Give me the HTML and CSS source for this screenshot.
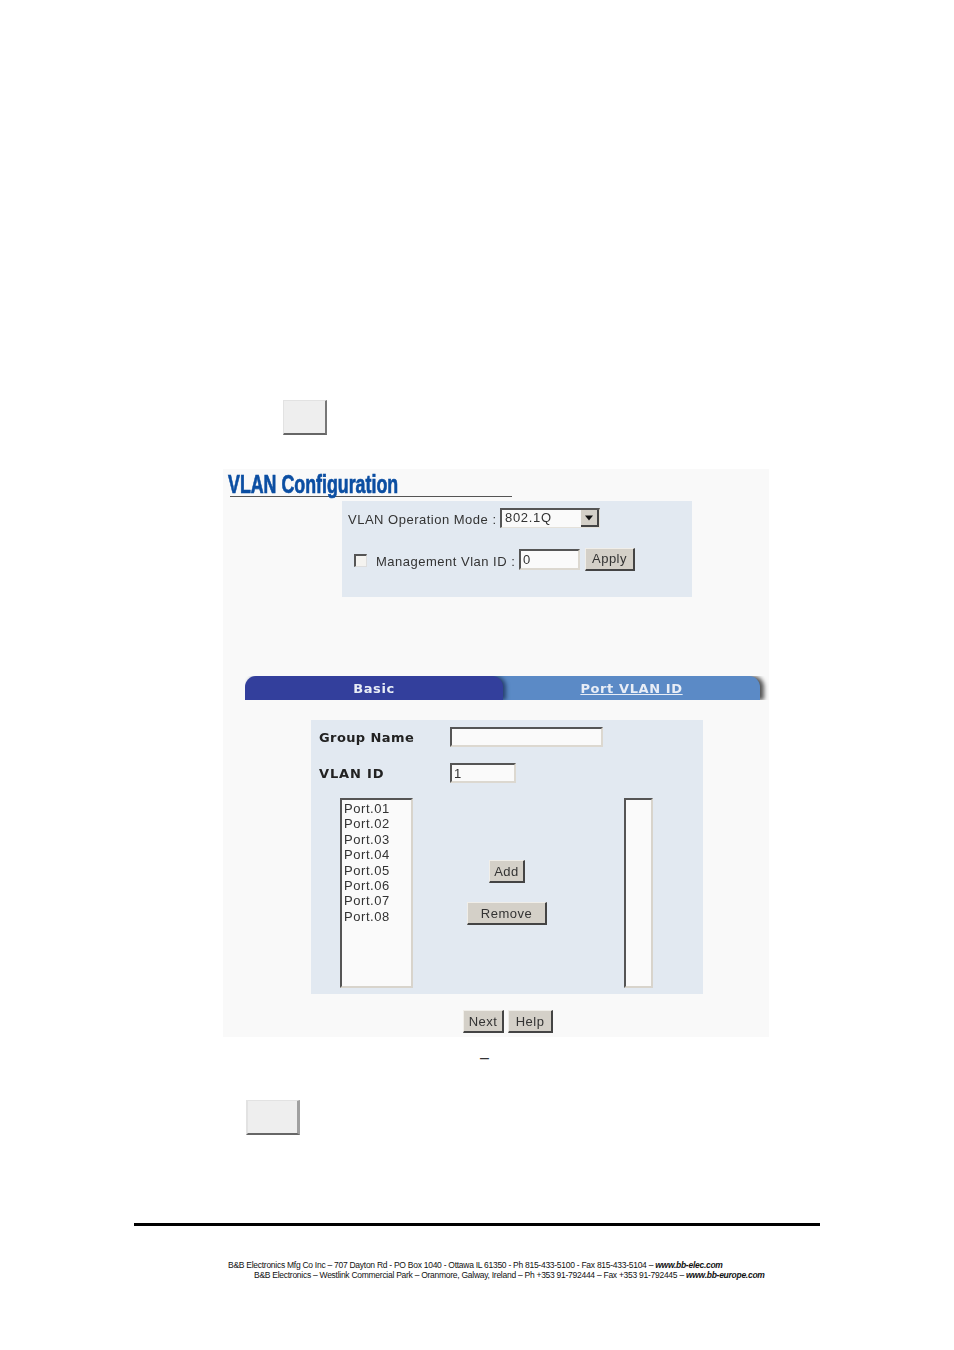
FILE: index.html
```html
<!DOCTYPE html>
<html lang="en">
<head>
<meta charset="utf-8">
<title>VLAN Configuration</title>
<link rel="stylesheet" href="styles.css">
</head>
<body>
<main class="page">
  <div class="blank-key key-one"></div>
  <figure class="shot">
    <div class="title-block">
      <h1 class="title">VLAN Configuration</h1>
    </div>
    <section class="mode-panel">
      <div class="mode-row">
        <span class="label mode-label">VLAN Operation Mode :</span>
        <div class="select">
          <span class="select-value">802.1Q</span>
          <span class="select-arrow"><svg width="10" height="6" viewBox="0 0 10 6"><path d="M1 .5h8L5 5.5z" fill="#111"/></svg></span>
        </div>
      </div>
      <div class="mgmt-row">
        <input class="check" type="checkbox" aria-label="Management Vlan ID">
        <span class="label mgmt-label">Management Vlan ID :</span>
        <input class="field field-mgmt" type="text" value="0">
        <button class="btn btn-apply" type="button">Apply</button>
      </div>
    </section>
    <nav class="tabs">
      <a class="tab tab-basic">Basic</a>
      <a class="tab tab-port">Port VLAN ID</a>
    </nav>
    <section class="group-panel">
      <div class="form-row row-name">
        <span class="strong-label">Group Name</span>
        <input class="field field-name" type="text">
      </div>
      <div class="form-row row-id">
        <span class="strong-label strong-caps">VLAN ID</span>
        <input class="field field-id" type="text" value="1">
      </div>
      <div class="lists">
        <div class="listbox list-left">
          <div>Port.01</div><div>Port.02</div><div>Port.03</div><div>Port.04</div>
          <div>Port.05</div><div>Port.06</div><div>Port.07</div><div>Port.08</div>
        </div>
        <div class="list-actions">
          <button class="btn btn-add" type="button">Add</button>
          <button class="btn btn-remove" type="button">Remove</button>
        </div>
        <div class="listbox list-right"></div>
      </div>
    </section>
    <div class="nav-buttons">
      <button class="btn btn-next" type="button">Next</button>
      <button class="btn btn-help" type="button">Help</button>
    </div>
  </figure>
  <p class="caption">–</p>
  <div class="blank-key key-two"></div>
  <hr class="rule">
  <footer class="footer">
    <p class="line line-one">B&amp;B Electronics Mfg Co Inc – 707 Dayton Rd - PO Box 1040 - Ottawa IL 61350 - Ph 815-433-5100 - Fax 815-433-5104 – <b>www.bb-elec.com</b></p>
    <p class="line line-two">B&amp;B Electronics – Westlink Commercial Park – Oranmore, Galway, Ireland – Ph +353 91-792444 – Fax +353 91-792445 – <b>www.bb-europe.com</b></p>
  </footer>
</main>
</body>
</html>
```
FILE: styles.css
```css
* { box-sizing: border-box; }
html, body { margin: 0; padding: 0; background: #fff; }
.page {
  width: 954px;
  height: 1350px;
  padding-top: 400px;
  overflow: hidden;
  font-family: "Liberation Sans", Arial, sans-serif;
  color: #222;
}

.blank-key { background: #eee; }
.key-one {
  width: 44px;
  height: 35px;
  margin-left: 283px;
  border: 1px solid #e2e2e2;
  border-right: 2px solid #777;
  border-bottom: 2px solid #666;
}
.key-two {
  width: 54px;
  height: 35px;
  margin-left: 246px;
  margin-top: 33px;
  border-left: 2px solid #e2e2e2;
  border-top: 1px solid #e2e2e2;
  border-right: 3px solid #a0a0a0;
  border-bottom: 2px solid #666;
}

.shot {
  width: 546px;
  height: 568px;
  margin: 34px 0 0 223px;
  padding-top: 4px;
  background: #f9f9f9;
  overflow: hidden;
  filter: blur(0.35px);
}

.title-block { height: 24px; margin-left: 7px; width: 282px; border-bottom: 1px solid #555; }
.title {
  margin: 0 0 0 -2px;
  font-family: "Liberation Sans", sans-serif;
  font-size: 26px;
  line-height: 23px;
  font-weight: 700;
  color: #0b4ea2;
  white-space: nowrap;
  transform: scaleX(0.685);
  transform-origin: left center;
  -webkit-text-stroke: 0.7px #0b4ea2;
}

.mode-panel {
  width: 350px;
  height: 96px;
  margin: 4px 0 0 119px;
  padding: 7px 0 0 6px;
  background: #e2e9f1;
}
.label { font-size: 13px; letter-spacing: 0.5px; line-height: 16px; color: #333; white-space: nowrap; }
.mode-row { display: flex; align-items: center; height: 20px; }
.mode-label { width: 152px; margin-top: 4px; }
.select {
  display: flex;
  align-items: center;
  justify-content: space-between;
  width: 100px;
  height: 20px;
  padding: 0 0 0 3px;
  background: #fafafa;
  border: 2px solid #555;
  border-right: 1px solid #e4e1da;
  border-bottom: 1px solid #e4e1da;
  font-size: 13px;
  letter-spacing: 0.7px;
  line-height: 14px;
  color: #333;
}
.select-value { margin-top: -2px; }
.select-arrow {
  display: flex;
  align-items: center;
  justify-content: center;
  width: 18px;
  height: 17px;
  background: #d4d0c8;
  border-right: 2px solid #444;
  border-bottom: 2px solid #444;
}
.mgmt-row { display: flex; align-items: center; height: 23px; margin-top: 20px; }
.check {
  appearance: none;
  width: 13px;
  height: 13px;
  margin: 2px 0 0 6px;
  background: #f4f3f0;
  border: 2px solid #555;
  border-right: 1px solid #ddd;
  border-bottom: 1px solid #ddd;
}
.mgmt-label { width: 143px; margin: 4px 0 0 9px; }
.field {
  display: block;
  margin: 0;
  padding: 0 0 0 2px;
  background: #fafafa;
  border: 2px solid #555;
  border-right: 2px solid #dcd8d0;
  border-bottom: 2px solid #dcd8d0;
  border-radius: 0;
  outline: none;
  font-family: "Liberation Sans", Arial, sans-serif;
  font-size: 13px;
  letter-spacing: 0.4px;
  color: #333;
}
.field-mgmt { width: 61px; height: 21px; }
.btn {
  margin: 0;
  padding: 0;
  background: #d4d0c8;
  border: 1px solid #f0eee9;
  border-right: 2px solid #444;
  border-bottom: 2px solid #444;
  border-radius: 0;
  font-family: "Liberation Sans", Arial, sans-serif;
  font-size: 13px;
  letter-spacing: 0.5px;
  color: #333;
}
.btn-apply { width: 50px; height: 23px; margin-left: 5px; padding-bottom: 2px; }

.tabs { display: flex; width: 524px; height: 24px; margin: 79px 0 0 22px; overflow: hidden; }
.tab {
  display: block;
  height: 24px;
  font-family: "DejaVu Sans", Verdana, sans-serif;
  font-size: 13px;
  font-weight: 700;
  line-height: 25px;
  letter-spacing: 0.6px;
  text-align: center;
  color: #e8edf6;
}
.tab-basic {
  position: relative;
  z-index: 1;
  width: 258px;
  background: #333f9c;
  border-radius: 11px 11px 0 0;
  box-shadow: 3px 0 4px #26406e;
}
.tab-port {
  width: 269px;
  margin-left: -12px;
  padding-left: 12px;
  background: #5b8ac6;
  text-decoration: underline;
  border-radius: 0 11px 0 0;
  box-shadow: 4px 0 4px #555;
}

.group-panel {
  width: 392px;
  height: 274px;
  margin: 20px 0 0 88px;
  padding: 7px 0 0 8px;
  background: #e2e9f1;
}
.form-row { display: flex; align-items: center; }
.row-name { height: 20px; }
.row-id { height: 20px; margin-top: 16px; }
.strong-label {
  width: 131px;
  font-family: "DejaVu Sans", Verdana, sans-serif;
  font-size: 13px;
  font-weight: 700;
  letter-spacing: 0.4px;
  color: #222;
  white-space: nowrap;
}
.strong-caps { letter-spacing: 0.85px; }
.field-name { width: 153px; height: 20px; }
.field-id { width: 66px; height: 20px; }

.lists { display: flex; margin: 15px 0 0 21px; }
.listbox {
  height: 190px;
  padding: 1px 0 0 2px;
  background: #fafafa;
  border: 2px solid #555;
  border-right: 2px solid #d8d4cc;
  border-bottom: 2px solid #d8d4cc;
  font-size: 13px;
  letter-spacing: 0.55px;
  line-height: 15.4px;
  color: #333;
}
.list-left { width: 73px; }
.list-right { width: 29px; }
.list-actions {
  display: flex;
  flex-direction: column;
  align-items: center;
  gap: 19px;
  width: 211px;
  padding: 62px 23px 0 0;
}
.btn-add { width: 36px; height: 23px; }
.btn-remove { width: 80px; height: 23px; }

.nav-buttons { display: flex; gap: 4px; margin: 16px 0 0 240px; }
.btn-next { width: 41px; height: 23px; }
.btn-help { width: 45px; height: 23px; }

.caption {
  height: 18px;
  margin: 12px 0 0 480px;
  font-size: 16px;
  line-height: 18px;
  color: #333;
}

.rule {
  width: 686px;
  height: 3px;
  margin: 88px 0 0 134px;
  background: #000;
  border: 0;
}

.footer { margin-top: 34px; font-size: 8.5px; letter-spacing: -0.27px; line-height: 10px; color: #111; }
.line { margin: 0; white-space: nowrap; }
.line b { font-style: italic; }
.line-one { margin-left: 228px; }
.line-two { margin-left: 254px; }
```
